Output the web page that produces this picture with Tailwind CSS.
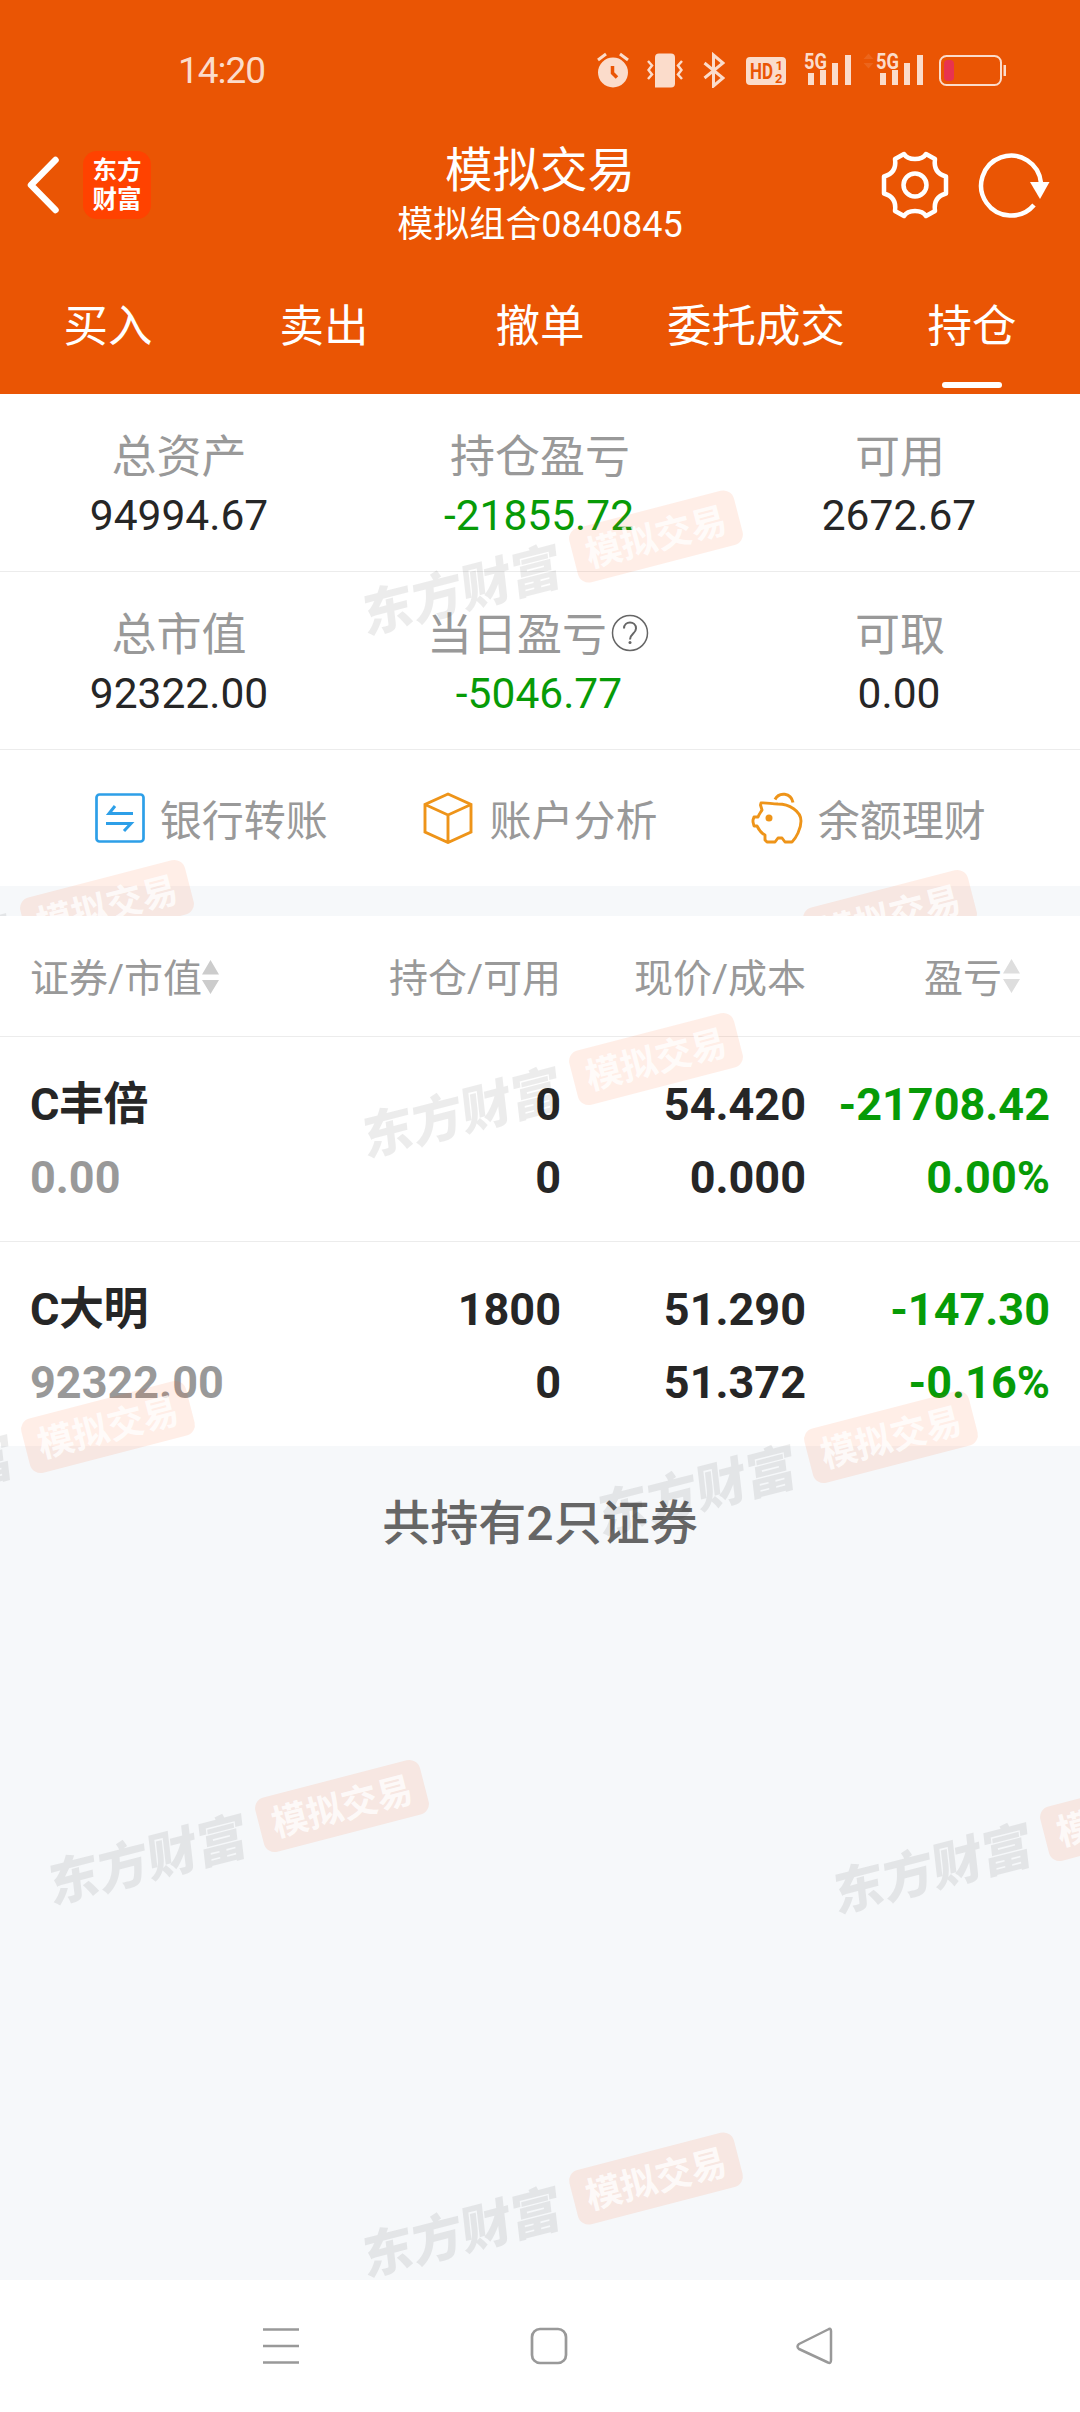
<!DOCTYPE html>
<html lang="zh-CN">
<head>
  <meta charset="UTF-8" />
  <meta name="viewport" content="width=device-width, initial-scale=1" />
  <title>模拟交易</title>
  <script src="https://cdn.jsdelivr.net/npm/@tailwindcss/browser@4"></script>
</head>
<body class="bg-[#f6f8fa] font-[Roboto,'Noto_Sans_CJK_SC',sans-serif] text-[#262626]">
  <div class="relative flex flex-col w-[1080px] h-[2412px] overflow-hidden">

    <header class="h-[394px] shrink-0 bg-[#ea5504] text-white flex flex-col">
      <!-- status bar -->
      <div class="h-[123px] pt-[17px] flex items-center text-[#fbdccb] pl-[178px] pr-[73px]">
        <span class="text-[37px] leading-none tracking-[-1px]">14:20</span>
        <div class="ml-auto flex items-center h-9 -mt-px">
          <svg class="w-8 h-9" viewBox="0 0 32 36" fill="none" stroke="currentColor" stroke-width="3">
            <circle cx="16" cy="20.500" r="15" fill="currentColor" stroke="none" />
            <path d="M1 8L9 2M31 8L23 2" />
            <path d="M15.500 14v7l4.500 4.500" stroke="#ea5504" stroke-width="3.500" />
          </svg>
          <svg class="ml-[18px] w-9 h-9" viewBox="0 0 36 36" fill="none" stroke="currentColor" stroke-width="2.500">
            <path d="M12 1.500h12q4 0 4 4v26q0 4-4 4H8V5.500q0-4 4-4z" fill="currentColor" stroke="none" />
            <path d="M1 9l4 4.500-3.500 4.500 3.500 4.500L1 27M35 9l-4 4.500 3.500 4.500-3.500 4.500 4 4.500" />
          </svg>
          <svg class="ml-5 w-[22px] h-9" viewBox="0 0 22 36" fill="none" stroke="currentColor" stroke-width="3">
            <path d="M1.500 11L20 26l-9.500 8V3L20 11 1.500 26" />
          </svg>
          <svg class="ml-[21px] w-10 h-9" viewBox="0 0 40 36">
            <rect y="5" width="40" height="28" rx="4" fill="currentColor" />
            <text x="4" y="27" font-size="22" font-weight="700" textLength="23" lengthAdjust="spacingAndGlyphs" fill="#ea5504">HD</text>
            <text x="29.500" y="18" font-size="13" font-weight="700" fill="#ea5504">1</text>
            <text x="29" y="30.500" font-size="13" font-weight="700" fill="#ea5504">2</text>
          </svg>
          <svg class="ml-[18px] w-12 h-9 overflow-visible" viewBox="0 0 48 36" fill="currentColor">
            <text x="0" y="16.500" font-size="22" font-weight="700" textLength="23" lengthAdjust="spacingAndGlyphs">5G</text>
            <path d="M4 21h6v12H4zM16 18h6v15h-6zM28 11h6v22h-6zM41 3h6v30h-6z" />
          </svg>
          <svg class="ml-[11px] w-[61px] h-9 overflow-visible" viewBox="0 0 61 36" fill="currentColor">
            <path d="M0.500 7L5.500 1.500 10.500 7zM0.500 11L5.500 16.500 10.500 11z" opacity=".12" />
            <text x="13" y="16.500" font-size="22" font-weight="700" textLength="23" lengthAdjust="spacingAndGlyphs">5G</text>
            <path d="M17 21h6v12h-6zM29 18h6v15h-6zM41 11h6v22h-6zM54 3h6v30h-6z" />
          </svg>
          <svg class="ml-[15px] w-[68px] h-9" viewBox="0 0 68 36">
            <rect x="1" y="4" width="61" height="29" rx="6.500" fill="none" stroke="currentColor" stroke-width="2" />
            <rect x="5" y="8" width="10" height="21" rx="4" fill="#e8334f" />
            <rect x="64.500" y="13" width="2.500" height="11" fill="currentColor" />
          </svg>
        </div>
      </div>

      <!-- title bar -->
      <div class="h-[126px] grid grid-cols-3 items-center">
        <div class="flex items-center pl-[26px] -mt-0.5">
          <svg class="w-[34px] h-[60px]" viewBox="0 0 34 60" fill="none" stroke="#fff" stroke-width="6.500" stroke-linecap="round" stroke-linejoin="round">
            <path d="M29.500 5L5 30l24.500 25" />
          </svg>
          <div class="ml-[23px] w-[68px] h-[68px] rounded-[14px] bg-[#ff4200] flex flex-col items-center justify-center text-[24.500px] leading-[29px] font-bold">
            <span>东方</span>
            <span>财富</span>
          </div>
        </div>
        <div class="text-center whitespace-nowrap pt-[18px]">
          <h1 class="text-[47.500px] leading-[60px]">模拟交易</h1>
          <p class="text-[36px] leading-[48px]">模拟组合0840845</p>
        </div>
        <div class="flex items-center justify-end pr-7 -mt-0.5">
          <svg class="w-[70px] h-[70px]" viewBox="-35 -35 70 70" fill="none" stroke="#fff" stroke-width="4.500" stroke-linejoin="round">
            <circle r="11.500" />
            <path d="M-11-31Q-8-26 0-26T11-31L20-26Q18-12 31-8.500V8.500Q18 12 20 26L11 31Q8 26 0 26T-11 31L-20 26Q-18 12-31 8.500V-8.500Q-18-12-20-26z" />
          </svg>
          <svg class="ml-7 w-[74px] h-[70px]" viewBox="0 0 74 70" fill="none" stroke="#fff" stroke-width="4.500">
            <path d="M56 55A30 30 0 1 1 63 33" />
            <path d="M52 32h19.500L62 49z" fill="#fff" stroke="none" />
          </svg>
        </div>
      </div>

      <!-- tabs -->
      <nav class="h-[145px] pt-3 grid grid-cols-5 text-[44.500px] leading-[133px] text-center whitespace-nowrap">
        <a>买入</a>
        <a>卖出</a>
        <a>撤单</a>
        <a>委托成交</a>
        <a class="relative">持仓<span class="absolute left-[78px] bottom-[6px] w-[60px] h-[6px] rounded-full bg-white"></span></a>
      </nav>
    </header>

    <!-- account summary -->
    <section class="bg-white shrink-0 h-[492px] text-center">
      <div class="h-[178px] grid grid-cols-3 border-b-[1.500px] border-[#ececec] pt-[34px]">
        <div>
          <p class="text-[45px] leading-[60px] text-[#999] -ml-0.5">总资产</p>
          <p class="text-[42.500px] leading-[56px] -ml-0.5">94994.67</p>
        </div>
        <div>
          <p class="text-[45px] leading-[60px] text-[#999]">持仓盈亏</p>
          <p class="text-[42.500px] leading-[56px] -ml-0.5 text-[#079b07]">-21855.72</p>
        </div>
        <div>
          <p class="text-[45px] leading-[60px] text-[#999]">可用</p>
          <p class="text-[42.500px] leading-[56px] -ml-0.5">2672.67</p>
        </div>
      </div>
      <div class="h-[178px] grid grid-cols-3 border-b-[1.500px] border-[#ececec] pt-[34px]">
        <div>
          <p class="text-[45px] leading-[60px] text-[#999] -ml-0.5">总市值</p>
          <p class="text-[42.500px] leading-[56px] -ml-0.5">92322.00</p>
        </div>
        <div>
          <div class="flex items-center justify-center text-[45px] leading-[60px] text-[#999] -ml-1">
            当日盈亏
            <svg class="ml-1 -mt-1.5 w-[38px] h-[38px]" viewBox="0 0 38 38" fill="none" stroke="#666" stroke-width="1.500">
              <circle cx="19" cy="19" r="17.500" />
              <path d="M13 14.500c0-8 12-8 12 0 0 5-6 5-6 11" stroke-width="2" />
              <circle cx="19" cy="28.500" r="1.500" fill="#666" stroke="none" />
            </svg>
          </div>
          <p class="text-[42.500px] leading-[56px] -ml-0.5 text-[#079b07]">-5046.77</p>
        </div>
        <div>
          <p class="text-[45px] leading-[60px] text-[#999]">可取</p>
          <p class="text-[42.500px] leading-[56px] -ml-0.5">0.00</p>
        </div>
      </div>

      <!-- shortcuts -->
      <div class="h-[136px] grid grid-cols-3 px-[46px] text-[42px] text-[#999]">
        <div class="flex items-center justify-center gap-[15px] pl-px">
          <svg class="w-[50px] h-[52px]" viewBox="0 0 50 52" fill="none" stroke="#2d9fe8" stroke-width="2.700">
            <rect x="1.500" y="2.500" width="47" height="47" rx="3" />
            <path d="M38 21.500H14L20 14M11 31.500h25L29 39" stroke-width="3" />
          </svg>
          <span class="pt-1.5">银行转账</span>
        </div>
        <div class="flex items-center justify-center gap-4 pl-px">
          <svg class="w-[50px] h-[52px]" viewBox="0 0 50 52" fill="none" stroke="#ee9419" stroke-width="2.900">
            <path d="M25 2L48 12.500V40L25 50.500 2 40V12.500zM2 12.500L25 23l23-10.500M25 23v27" />
          </svg>
          <span class="pt-1.5">账户分析</span>
        </div>
        <div class="flex items-center justify-center gap-[15px] pr-0.5">
          <svg class="w-[52px] h-[52px]" viewBox="0 0 52 52" fill="none" stroke="#ee9419" stroke-width="2.900" stroke-linejoin="round">
            <path d="M10 11c5-.5 10 .8 17 1 11 0 23 7 23 17 0 8-5 17-9 21h-7l-3-4h-4l-3 4h-8l-2-2v-5c-4-2-6-5-8-9H3l-1-4v-2l1-3h4c1-3 3-5 4-7L9.500 13z" />
            <path d="M24 7.500c4-8 16-7 18 3" stroke-width="3" />
            <circle cx="18" cy="26" r="3.500" fill="#ee9419" stroke="none" />
          </svg>
          <span class="pt-1.5">余额理财</span>
        </div>
      </div>
    </section>

    <!-- holdings -->
    <section class="mt-[30px] shrink-0 bg-white">
      <div class="h-[121px] grid grid-cols-[250px_281px_245px_244px] items-center px-[30px] pt-1.5 border-b-[1.500px] border-[#ececec] text-[39px] text-[#999] text-right whitespace-nowrap">
        <span class="flex items-center">证券/市值
          <svg class="-mt-1 w-[17px] h-9" viewBox="0 0 17 36" fill="#ccc"><path d="M0 15.500L8.500 1 17 15.500zM0 21L8.500 35 17 21z" /></svg>
        </span>
        <span>持仓/可用</span>
        <span>现价/成本</span>
        <span class="flex items-center justify-end pr-[30px]">盈亏
          <svg class="ml-px -mt-1.5 w-[17px] h-9" viewBox="0 0 17 36" fill="#dedede"><path d="M0 15.500L8.500 1 17 15.500zM0 21L8.500 35 17 21z" /></svg>
        </span>
      </div>
      <div class="h-[205px] grid grid-cols-[250px_281px_245px_244px] content-center gap-y-[13px] pt-1 px-[30px] border-b-[1.500px] border-[#ececec] text-[45px] leading-[60px] font-bold text-right">
        <span class="text-left tracking-[-0.5px]">C丰倍</span>
        <span>0</span>
        <span>54.420</span>
        <span class="text-[#079b07]">-21708.42</span>
        <span class="text-left text-[#999]">0.00</span>
        <span>0</span>
        <span>0.000</span>
        <span class="text-[#079b07]">0.00%</span>
      </div>
      <div class="h-[204px] grid grid-cols-[250px_281px_245px_244px] content-center gap-y-[13px] pt-1 px-[30px] text-[45px] leading-[60px] font-bold text-right">
        <span class="text-left tracking-[-0.5px]">C大明</span>
        <span>1800</span>
        <span>51.290</span>
        <span class="text-[#079b07]">-147.30</span>
        <span class="text-left text-[#999]">92322.00</span>
        <span>0</span>
        <span>51.372</span>
        <span class="text-[#079b07]">-0.16%</span>
      </div>
    </section>

    <p class="mt-[43px] text-center text-[48px] leading-[70px] font-medium text-[#666]">共持有2只证券</p>

    <!-- system navigation -->
    <footer class="mt-auto h-[132px] bg-white flex items-center pl-[262px] gap-[230px] text-[#999]">
      <svg class="w-[38px] h-[38px]" viewBox="0 0 38 38" fill="none" stroke="currentColor" stroke-width="2.700"><path d="M1 2.500h36M1 19h36M1 35.500h36" /></svg>
      <svg class="w-[38px] h-[38px]" viewBox="0 0 38 38" fill="none" stroke="currentColor" stroke-width="2.700"><rect x="2" y="2" width="34" height="34" rx="8" /></svg>
      <svg class="-ml-0.5 w-[38px] h-[38px]" viewBox="0 0 38 38" fill="none" stroke="currentColor" stroke-width="2.500" stroke-linejoin="round"><path d="M32 2.500Q35 0.500 35 4v29q0 4-3 2.500L3 22q-3-2.500 0-5z" /></svg>
    </footer>

    <!-- watermarks -->
    <svg class="absolute inset-0 w-[1080px] h-[2412px] pointer-events-none" viewBox="0 0 1080 2412">
      <defs>
        <clipPath id="gap"><rect y="750" width="1080" height="166" /></clipPath>
        <g id="mark">
          <g transform="rotate(-14.500)">
            <rect x="-85" y="-28" width="170" height="56" rx="11" fill="#ff5a14" fill-opacity=".1" />
            <text y="13.500" text-anchor="middle" font-size="36" font-weight="700" fill="#fff" fill-opacity=".8">模拟交易</text>
            <text transform="translate(-204 22) skewX(-8)" text-anchor="middle" font-size="51" font-weight="900" fill="#000" fill-opacity=".075">东方财富</text>
          </g>
        </g>
      </defs>
      <use href="#mark" x="656" y="536.500" />
      <g clip-path="url(#gap)">
        <use href="#mark" x="107" y="906" />
        <use href="#mark" x="890" y="916" />
      </g>
      <use href="#mark" x="656" y="1059" />
      <use href="#mark" x="108" y="1427" />
      <use href="#mark" x="891" y="1437" />
      <use href="#mark" x="342" y="1806" />
      <use href="#mark" x="1127" y="1815" />
      <use href="#mark" x="656" y="2178.500" />
    </svg>
  </div>
</body>
</html>
